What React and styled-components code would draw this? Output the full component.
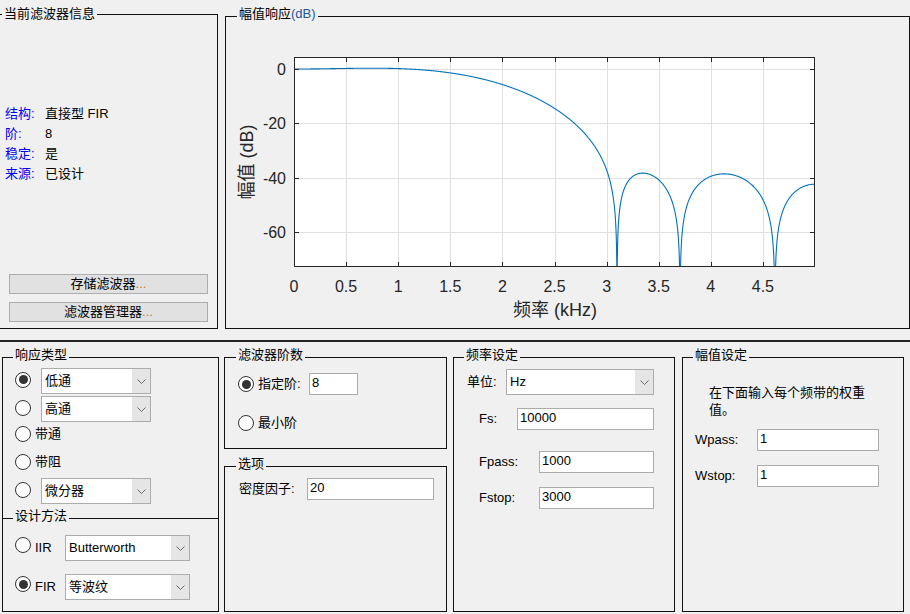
import React from 'react'
import styled, { createGlobalStyle } from 'styled-components'

const GlobalStyle = createGlobalStyle`
  html, body {
    margin: 0;
    padding: 0;
    background: #f0f0f0;
  }
  body {
    font-family: "Liberation Sans", "Noto Sans CJK SC", sans-serif;
    font-size: 13px;
    color: #000;
  }
`

const Window = styled.div`
  width: 910px;
  height: 614px;
  overflow: hidden;
  background: #f0f0f0;
`

const TopArea = styled.div`
  display: flex;
  align-items: flex-start;
  height: 340px;
`

const Divider = styled.div`
  height: 2px;
  background: #262626;
`

const BottomArea = styled.div`
  display: flex;
  align-items: flex-start;
  padding: 15px 0 0 2px;
`

const Column = styled.div`
  display: flex;
  flex-direction: column;
  width: ${p => p.$w}px;
  margin-left: ${p => p.$ml || 0}px;
`

const Panel = styled.div`
  position: relative;
  box-sizing: border-box;
  display: flex;
  flex-direction: column;
  border: 1px solid #111;
  width: ${p => (p.$w ? `${p.$w}px` : 'auto')};
  height: ${p => p.$h}px;
  margin-top: ${p => p.$mt || 0}px;
  margin-left: ${p => p.$ml || 0}px;
  padding-top: ${p => p.$pt || 0}px;
`

const Legend = styled.span`
  position: absolute;
  top: ${p => p.$top ?? -10}px;
  left: ${p => p.$left ?? 10}px;
  padding: 0 2px;
  background: #f0f0f0;
  line-height: 16px;
  white-space: nowrap;
`

const Blue = styled.span`
  color: #2456a0;
`

/* ---------- current filter info ---------- */

const InfoBody = styled.div`
  flex: 1;
  display: flex;
  flex-direction: column;
  padding: 89px 0 6px 7px;
`

const InfoRow = styled.div`
  display: flex;
  height: 20px;
  line-height: 20px;
`

const InfoLabel = styled.span`
  width: 40px;
  color: #0000f0;
`

const ButtonStack = styled.div`
  margin-top: auto;
  margin-left: 4px;
  display: flex;
  flex-direction: column;
  gap: 8px;
`

const PushButton = styled.button`
  box-sizing: border-box;
  width: 199px;
  height: 20px;
  padding: 0;
  border: 1px solid #adadad;
  background: #e1e1e1;
  font-family: inherit;
  font-size: 13px;
  line-height: 18px;
  color: #000;
  text-align: center;
`

const Dots = styled.span`
  color: #c0782a;
`

/* ---------- controls ---------- */

const Row = styled.div`
  display: flex;
  align-items: center;
  height: ${p => p.$h || 22}px;
  margin-top: ${p => p.$mt || 0}px;
  padding-left: ${p => p.$pl || 0}px;
  line-height: 16px;
`

const Radio = styled.span`
  box-sizing: border-box;
  flex: none;
  display: flex;
  align-items: center;
  justify-content: center;
  width: 16px;
  height: 16px;
  margin-bottom: ${p => p.$lift || 0}px;
  border: 1px solid #333;
  border-radius: 50%;
  background: #fff;
  &::after {
    content: '';
    display: ${p => (p.$on ? 'block' : 'none')};
    width: 9px;
    height: 9px;
    border-radius: 50%;
    background: #333;
  }
`

const RadioText = styled.span`
  margin-left: 4px;
  width: ${p => (p.$w ? `${p.$w}px` : 'auto')};
  flex: none;
  white-space: nowrap;
`

const Label = styled.span`
  flex: none;
  width: ${p => p.$w}px;
  white-space: nowrap;
`

const Select = styled.div`
  box-sizing: border-box;
  flex: none;
  display: flex;
  width: ${p => p.$w}px;
  height: 26px;
  margin-left: ${p => p.$ml || 0}px;
  border: 1px solid #acacac;
  background: #fff;
`

const SelectText = styled.span`
  flex: 1;
  display: flex;
  align-items: center;
  padding-left: 3px;
  white-space: nowrap;
`

const SelectArrow = styled.span`
  width: 18px;
  display: flex;
  align-items: center;
  justify-content: center;
  background: #e5e5e5;
`

const Field = styled.div`
  box-sizing: border-box;
  flex: none;
  display: flex;
  align-items: center;
  width: ${p => p.$w}px;
  height: 22px;
  padding: 0 0 2px 2px;
  border: 1px solid #acacac;
  background: #fff;
`

const Note = styled.p`
  width: 165px;
  margin: 26px 0 0 26px;
  line-height: 17px;
`

function Chevron() {
  return (
    <svg width="9" height="5" viewBox="0 0 9 5">
      <path d="M0.5 0.5 L4.5 4.5 L8.5 0.5" fill="none" stroke="#6a6a6a" strokeWidth="1" />
    </svg>
  )
}

function Dropdown({ w, ml, children }) {
  return (
    <Select $w={w} $ml={ml}>
      <SelectText>{children}</SelectText>
      <SelectArrow><Chevron /></SelectArrow>
    </Select>
  )
}

/* ---------- magnitude response chart ---------- */

const AX = { left: 294, right: 815, top: 57, bottom: 267 }
const fx = f => AX.left + f * 104.2
const dy = db => 69 - db * 2.717

const nulls = [3.1, 3.705, 4.615]
const nullX = nulls.map(f => Math.cos((2 * Math.PI * f) / 10))
const amp = f => {
  const x = Math.cos((2 * Math.PI * f) / 10)
  let p = x - 1.4
  nullX.forEach(z => { p *= x - z })
  return Math.abs(p)
}
const ref = amp(0)

function buildCurve() {
  const fs = []
  for (let i = 0; i <= 2000; i++) fs.push((i * 5) / 2000)
  nulls.forEach(f => fs.push(f))
  fs.sort((a, b) => a - b)
  return fs.map((f, i) => {
    const r = amp(f) / ref
    const db = r > 1e-6 ? 20 * Math.log10(r) : -120
    const y = Math.min(dy(db), 400)
    return `${i ? 'L' : 'M'}${fx(f).toFixed(2)} ${y.toFixed(2)}`
  }).join(' ')
}

const ChartSvg = styled.svg`
  display: block;
  font-family: "Liberation Sans", "Noto Sans CJK SC", sans-serif;
`

function MagnitudeChart() {
  const xTicks = [0, 0.5, 1, 1.5, 2, 2.5, 3, 3.5, 4, 4.5]
  const yTicks = [0, -20, -40, -60]
  const ink = '#262626'
  const px = v => Math.round(v) + 0.5
  return (
    <ChartSvg width="683" height="311" viewBox="226 17 683 311">
      <defs>
        <clipPath id="plotArea">
          <rect x={AX.left} y={AX.top} width={AX.right - AX.left} height={AX.bottom - AX.top} />
        </clipPath>
      </defs>
      <rect x={AX.left} y={AX.top} width={AX.right - AX.left} height={AX.bottom - AX.top} fill="#fff" />
      {xTicks.slice(1).map(t => (
        <line key={t} x1={px(fx(t))} x2={px(fx(t))} y1={AX.top} y2={AX.bottom} stroke="#dfdfdf" />
      ))}
      {yTicks.map(t => (
        <line key={t} x1={AX.left} x2={AX.right} y1={px(dy(t))} y2={px(dy(t))} stroke="#dfdfdf" />
      ))}
      <path d={buildCurve()} fill="none" stroke="#0072bd" strokeWidth="1.1" clipPath="url(#plotArea)" />
      <rect x={AX.left + 0.5} y={AX.top + 0.5} width={AX.right - AX.left - 1} height={AX.bottom - AX.top - 1} fill="none" stroke={ink} />
      {xTicks.slice(1).map(t => (
        <g key={t} stroke={ink}>
          <line x1={px(fx(t))} x2={px(fx(t))} y1={AX.bottom} y2={AX.bottom - 5} />
          <line x1={px(fx(t))} x2={px(fx(t))} y1={AX.top} y2={AX.top + 5} />
        </g>
      ))}
      {yTicks.map(t => (
        <g key={t} stroke={ink}>
          <line x1={AX.left} x2={AX.left + 5} y1={px(dy(t))} y2={px(dy(t))} />
          <line x1={AX.right} x2={AX.right - 5} y1={px(dy(t))} y2={px(dy(t))} />
        </g>
      ))}
      <g fill={ink} fontSize="16">
        {xTicks.map(t => (
          <text key={t} x={fx(t)} y="292" textAnchor="middle">{t}</text>
        ))}
        {yTicks.map(t => (
          <text key={t} x="286" y={dy(t) + 6} textAnchor="end">{t}</text>
        ))}
      </g>
      <text x="555" y="316" textAnchor="middle" fontSize="18" fill={ink}>频率 (kHz)</text>
      <text x="0" y="0" textAnchor="middle" fontSize="18" fill={ink} transform="translate(253 162) rotate(-90)">
        幅值 (dB)
      </text>
    </ChartSvg>
  )
}

/* ---------- page ---------- */

export default function App() {
  return (
    <Window>
      <GlobalStyle />
      <TopArea>
        <Panel $w={221} $h={315} $mt={14} $ml={-3}>
          <Legend $left={4} $top={-9}>当前滤波器信息</Legend>
          <InfoBody>
            <InfoRow><InfoLabel>结构:</InfoLabel>直接型 FIR</InfoRow>
            <InfoRow><InfoLabel>阶:</InfoLabel>8</InfoRow>
            <InfoRow><InfoLabel>稳定:</InfoLabel>是</InfoRow>
            <InfoRow><InfoLabel>来源:</InfoLabel>已设计</InfoRow>
            <ButtonStack>
              <PushButton>存储滤波器<Dots>...</Dots></PushButton>
              <PushButton>滤波器管理器<Dots>...</Dots></PushButton>
            </ButtonStack>
          </InfoBody>
        </Panel>
        <Panel $w={685} $h={313} $mt={16} $ml={7}>
          <Legend $left={11} $top={-11}>幅值响应<Blue>(dB)</Blue></Legend>
          <MagnitudeChart />
        </Panel>
      </TopArea>
      <Divider />
      <BottomArea>
        <Column $w={217}>
          <Panel $h={162}>
            <Legend $left={10} $top={-11}>响应类型</Legend>
            <Row $h={26} $mt={10} $pl={12}>
              <Radio $on $lift={3} />
              <Dropdown w={110} ml={10}>低通</Dropdown>
            </Row>
            <Row $h={26} $mt={2} $pl={12}>
              <Radio $lift={3} />
              <Dropdown w={110} ml={10}>高通</Dropdown>
            </Row>
            <Row $h={20} $mt={2} $pl={12}>
              <Radio />
              <RadioText>带通</RadioText>
            </Row>
            <Row $h={20} $mt={8} $pl={12}>
              <Radio />
              <RadioText>带阻</RadioText>
            </Row>
            <Row $h={26} $mt={6} $pl={12}>
              <Radio $lift={3} />
              <Dropdown w={110} ml={10}>微分器</Dropdown>
            </Row>
          </Panel>
          <Panel $h={94} $mt={-1}>
            <Legend $left={10} $top={-11}>设计方法</Legend>
            <Row $h={26} $mt={16} $pl={12}>
              <Radio $lift={6} />
              <RadioText $w={26}>IIR</RadioText>
              <Dropdown w={125} ml={4}>Butterworth</Dropdown>
            </Row>
            <Row $h={26} $mt={13} $pl={12}>
              <Radio $on $lift={6} />
              <RadioText $w={26}>FIR</RadioText>
              <Dropdown w={125} ml={4}>等波纹</Dropdown>
            </Row>
          </Panel>
        </Column>

        <Column $w={223} $ml={5}>
          <Panel $h={92}>
            <Legend $left={11} $top={-11}>滤波器阶数</Legend>
            <Row $mt={15} $pl={13}>
              <Radio $on />
              <RadioText $w={51}>指定阶:</RadioText>
              <Field $w={49}>8</Field>
            </Row>
            <Row $mt={17} $pl={13}>
              <Radio />
              <RadioText>最小阶</RadioText>
            </Row>
          </Panel>
          <Panel $h={146} $mt={17}>
            <Legend $left={11} $top={-11}>选项</Legend>
            <Row $mt={11} $pl={14}>
              <Label $w={68}>密度因子:</Label>
              <Field $w={127}>20</Field>
            </Row>
          </Panel>
        </Column>

        <Column $w={222} $ml={6}>
          <Panel $h={255}>
            <Legend $left={10} $top={-11}>频率设定</Legend>
            <Row $h={26} $mt={11} $pl={13}>
              <Label $w={39}>单位:</Label>
              <Dropdown w={148}>Hz</Dropdown>
            </Row>
            <Row $mt={13} $pl={25}>
              <Label $w={38}>Fs:</Label>
              <Field $w={137}>10000</Field>
            </Row>
            <Row $mt={21} $pl={25}>
              <Label $w={60}>Fpass:</Label>
              <Field $w={115}>1000</Field>
            </Row>
            <Row $mt={14} $pl={25}>
              <Label $w={60}>Fstop:</Label>
              <Field $w={115}>3000</Field>
            </Row>
          </Panel>
        </Column>

        <Column $w={222} $ml={7}>
          <Panel $h={255}>
            <Legend $left={10} $top={-11}>幅值设定</Legend>
            <Note>在下面输入每个频带的权重值。</Note>
            <Row $mt={11} $pl={12}>
              <Label $w={62}>Wpass:</Label>
              <Field $w={122}>1</Field>
            </Row>
            <Row $mt={14} $pl={12}>
              <Label $w={62}>Wstop:</Label>
              <Field $w={122}>1</Field>
            </Row>
          </Panel>
        </Column>
      </BottomArea>
    </Window>
  )
}
